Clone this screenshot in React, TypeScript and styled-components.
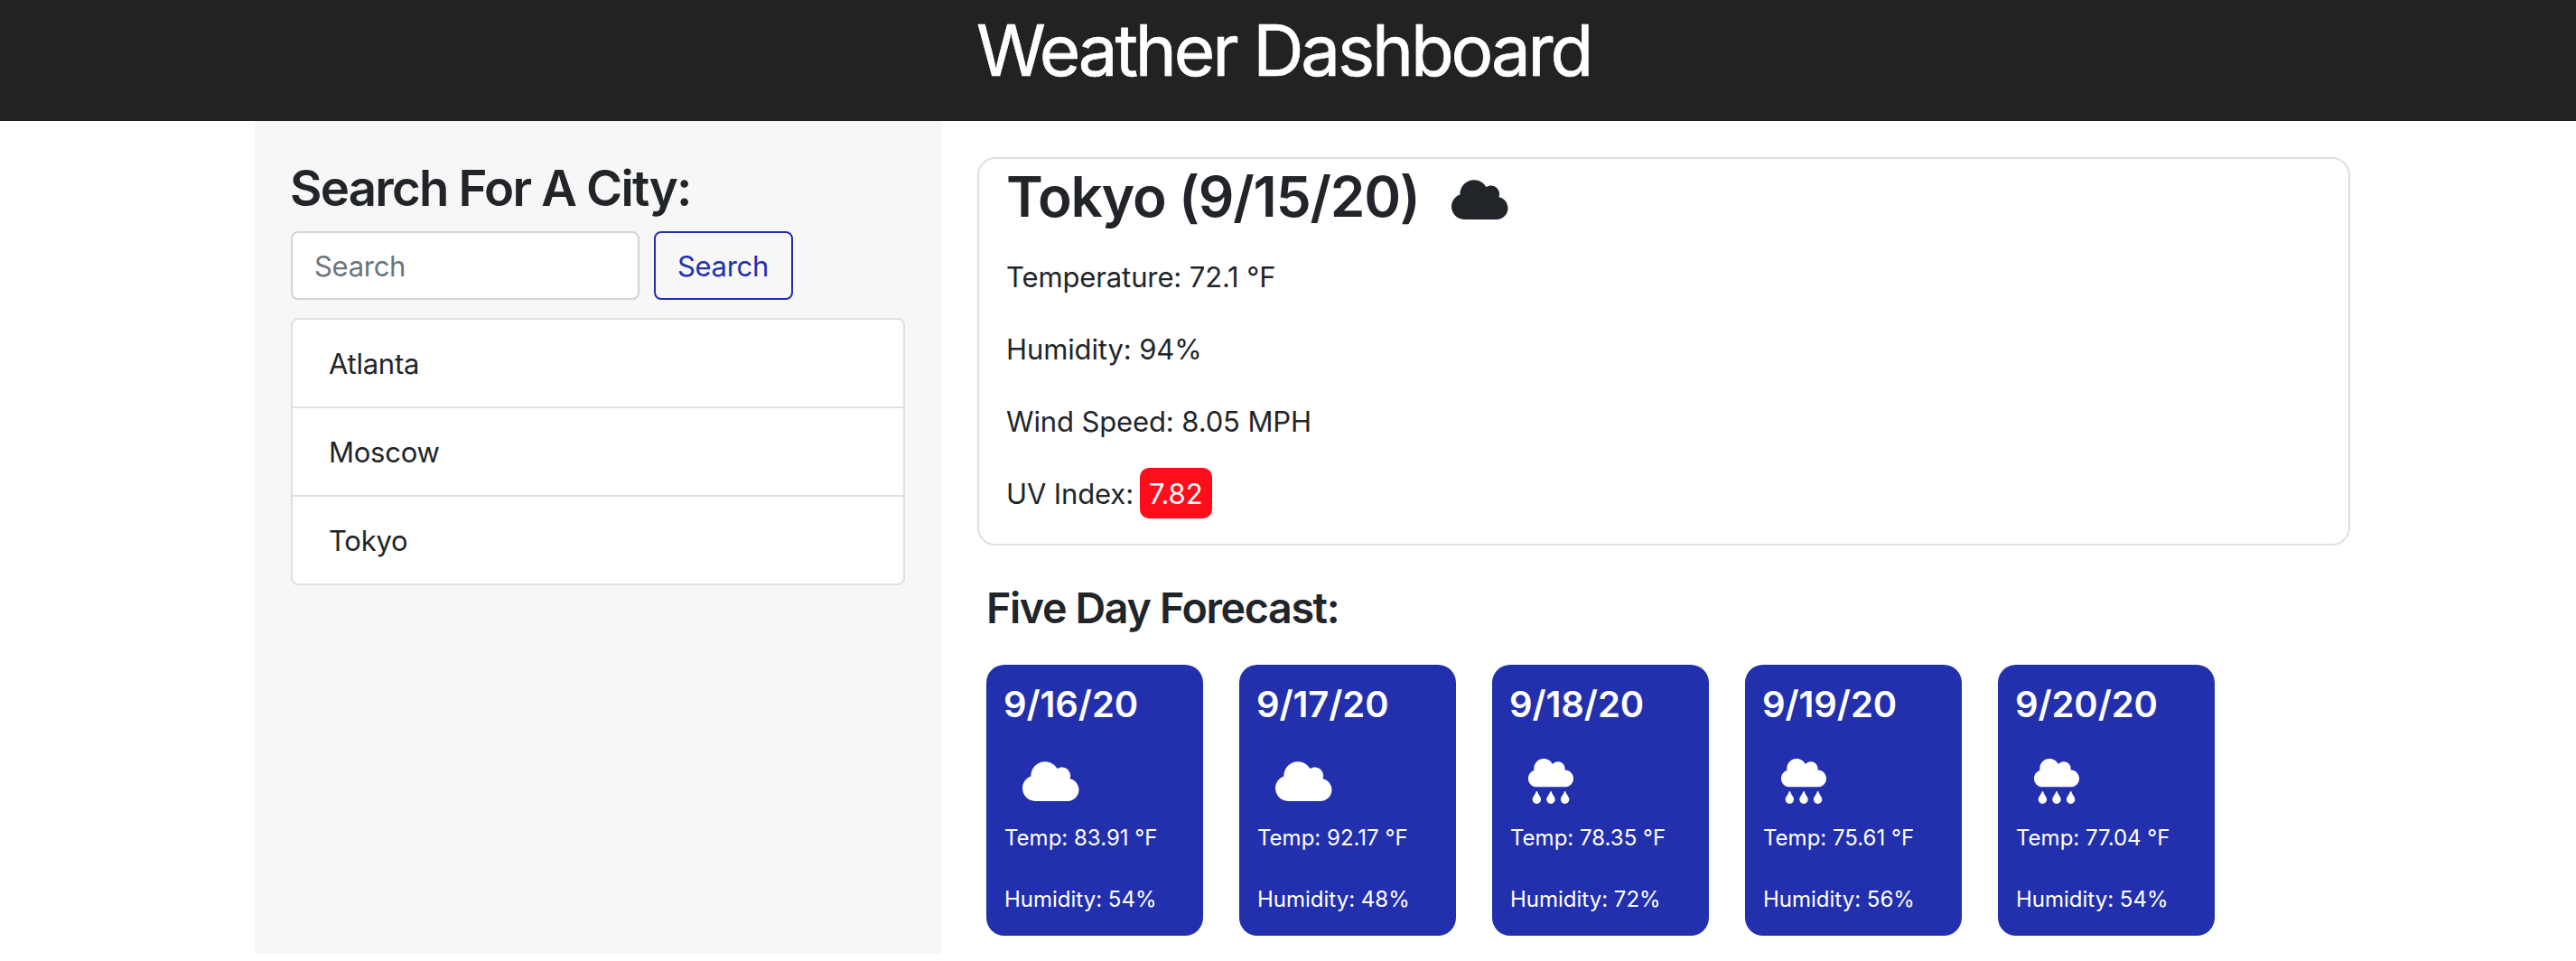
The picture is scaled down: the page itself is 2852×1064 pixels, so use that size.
import React from 'react';
import styled, { createGlobalStyle } from 'styled-components';
import { FaCloud, FaCloudRain } from 'react-icons/fa';

const ink = '#212529';
const blue = '#2230ae';
const line = '#dfdfdf';

const GlobalStyle = createGlobalStyle`
  *, *::before, *::after { box-sizing: border-box; }
  body {
    margin: 0;
    background: #fff;
    color: ${ink};
    font: 400 31px/48px Inter, "Liberation Sans", sans-serif;
    letter-spacing: -0.12px;
    overflow: hidden;
  }
  h1, h2, h3, h4, p, ul { margin: 0; padding: 0; }
  input, button { font: inherit; letter-spacing: inherit; }
`;

const Header = styled.header`
  height: 134px;
  padding: 8px 0 0 1081px;
  background: #222;
  border-bottom: 2px solid #1f1f1f;
  color: #fff;
`;

const Title = styled.h1`
  font-size: 78px;
  font-weight: 400;
  line-height: 96px;
  letter-spacing: -3.15px;
  -webkit-text-stroke: 0.7px #fff;
  white-space: nowrap;
`;

const Layout = styled.main`
  display: flex;
  gap: 40px;
  padding-left: 282px;
`;

const Sidebar = styled.aside`
  width: 760px;
  height: 922px;
  padding: 40px 40px 0;
  background: #f7f7f7;
`;

const SidebarTitle = styled.h2`
  margin: 0 0 14px -1px;
  font-size: 54.5px;
  font-weight: 600;
  line-height: 68px;
  letter-spacing: -1.76px;
  white-space: nowrap;
`;

const SearchForm = styled.form`
  display: flex;
  gap: 16px;
  height: 76px;
  margin-bottom: 20px;
  letter-spacing: -0.3px;
`;

const SearchInput = styled.input`
  width: 386px;
  padding: 2px 24px 0;
  background: #fff;
  border: 2px solid #ced4da;
  border-radius: 8px;
  color: #495057;
  outline: none;
  &::placeholder { color: #6c757d; opacity: 1; }
`;

const SearchButton = styled.button`
  width: 154px;
  padding: 2px 1px 0 0;
  background: transparent;
  border: 2px solid ${blue};
  border-radius: 8px;
  color: ${blue};
`;

const CityList = styled.ul`
  list-style: none;
  border: 2px solid ${line};
  border-radius: 8px;
  background: #fff;
  overflow: hidden;
  letter-spacing: -0.25px;
`;

const City = styled.li`
  height: 98px;
  padding: 25px 40px 0;
  border-bottom: 2px solid ${line};
  &:last-child { height: 96px; border-bottom: 0; }
`;

const Content = styled.section`
  width: 1520px;
  padding-top: 40px;
`;

const CurrentCard = styled.article`
  height: 430px;
  padding: 4px 30px 0;
  border: 2px solid ${line};
  border-radius: 20px;
`;

const CurrentHeading = styled.h2`
  display: flex;
  align-items: flex-start;
  margin-bottom: 11px;
  font-size: 62px;
  font-weight: 600;
  line-height: 75px;
  letter-spacing: -1.2px;
  white-space: nowrap;
`;

const CurrentName = styled.span`
  width: 493px;
`;

const IconBox = styled.span<{ $wide: boolean; $top?: number; $left?: number }>`
  display: block;
  margin: ${p => p.$top ?? 0}px 0 0 ${p => p.$left ?? 0}px;
  line-height: 0;
  svg {
    display: block;
    width: ${p => (p.$wide ? 62.5 : 50)}px;
    height: 50px;
  }
`;

const Reading = styled.p`
  display: flex;
  align-items: center;
  height: 80px;
  line-height: 50px;
  white-space: pre;
`;

const ReadingText = styled.span`
  padding-top: 1px;
`;

const UvBadge = styled.span`
  width: 80px;
  height: 56px;
  margin-left: 7px;
  padding-left: 10px;
  border-radius: 10px;
  background: #ff0d1b;
  color: #fff;
  line-height: 57px;
`;

const ForecastSection = styled.section`
  margin: 40px 0 0 10px;
`;

const ForecastTitle = styled.h3`
  margin-bottom: 34px;
  font-size: 46.6px;
  font-weight: 600;
  line-height: 58px;
  letter-spacing: -1.36px;
`;

const ForecastRow = styled.div`
  display: flex;
  gap: 40px;
`;

const DayCard = styled.article`
  width: 240px;
  height: 300px;
  padding: 20px;
  border-radius: 20px;
  background: ${blue};
  color: #fff;
`;

const DayDate = styled.h4`
  height: 84px;
  margin-left: -1px;
  font-size: 40px;
  font-weight: 600;
  line-height: 48px;
  letter-spacing: -0.1px;
  white-space: nowrap;
`;

const DayReading = styled.p`
  margin-top: 19.5px;
  font-size: 24px;
  line-height: 36px;
  letter-spacing: 0;
  white-space: nowrap;
  & + & { margin-top: 32px; }
`;

const cities = ['Atlanta', 'Moscow', 'Tokyo'];

const days = [
  { date: '9/16/20', rain: false, temp: '83.91', humidity: 54 },
  { date: '9/17/20', rain: false, temp: '92.17', humidity: 48 },
  { date: '9/18/20', rain: true, temp: '78.35', humidity: 72 },
  { date: '9/19/20', rain: true, temp: '75.61', humidity: 56 },
  { date: '9/20/20', rain: true, temp: '77.04', humidity: 54 },
];

export default function App() {
  return (
    <>
      <GlobalStyle />
      <Header>
        <Title>Weather Dashboard</Title>
      </Header>
      <Layout>
        <Sidebar>
          <SidebarTitle>Search For A City:</SidebarTitle>
          <SearchForm onSubmit={e => e.preventDefault()}>
            <SearchInput placeholder="Search" aria-label="Search" />
            <SearchButton type="submit">Search</SearchButton>
          </SearchForm>
          <CityList>
            {cities.map(city => <City key={city}>{city}</City>)}
          </CityList>
        </Sidebar>
        <Content>
          <CurrentCard>
            <CurrentHeading>
              <CurrentName>Tokyo (9/15/20)</CurrentName>
              <IconBox $wide $top={16}><FaCloud /></IconBox>
            </CurrentHeading>
            <Reading><ReadingText>Temperature: 72.1 °F</ReadingText></Reading>
            <Reading><ReadingText>Humidity: 94%</ReadingText></Reading>
            <Reading><ReadingText>Wind Speed: 8.05 MPH</ReadingText></Reading>
            <Reading>
              <ReadingText>UV Index:</ReadingText>
              <UvBadge>7.82</UvBadge>
            </Reading>
          </CurrentCard>
          <ForecastSection>
            <ForecastTitle>Five Day Forecast:</ForecastTitle>
            <ForecastRow>
              {days.map(({ date, rain, temp, humidity }) => (
                <DayCard key={date}>
                  <DayDate>{date}</DayDate>
                  <IconBox $wide={!rain} $left={20}>
                    {rain ? <FaCloudRain /> : <FaCloud />}
                  </IconBox>
                  <DayReading>Temp: {temp} °F</DayReading>
                  <DayReading>Humidity: {humidity}%</DayReading>
                </DayCard>
              ))}
            </ForecastRow>
          </ForecastSection>
        </Content>
      </Layout>
    </>
  );
}
